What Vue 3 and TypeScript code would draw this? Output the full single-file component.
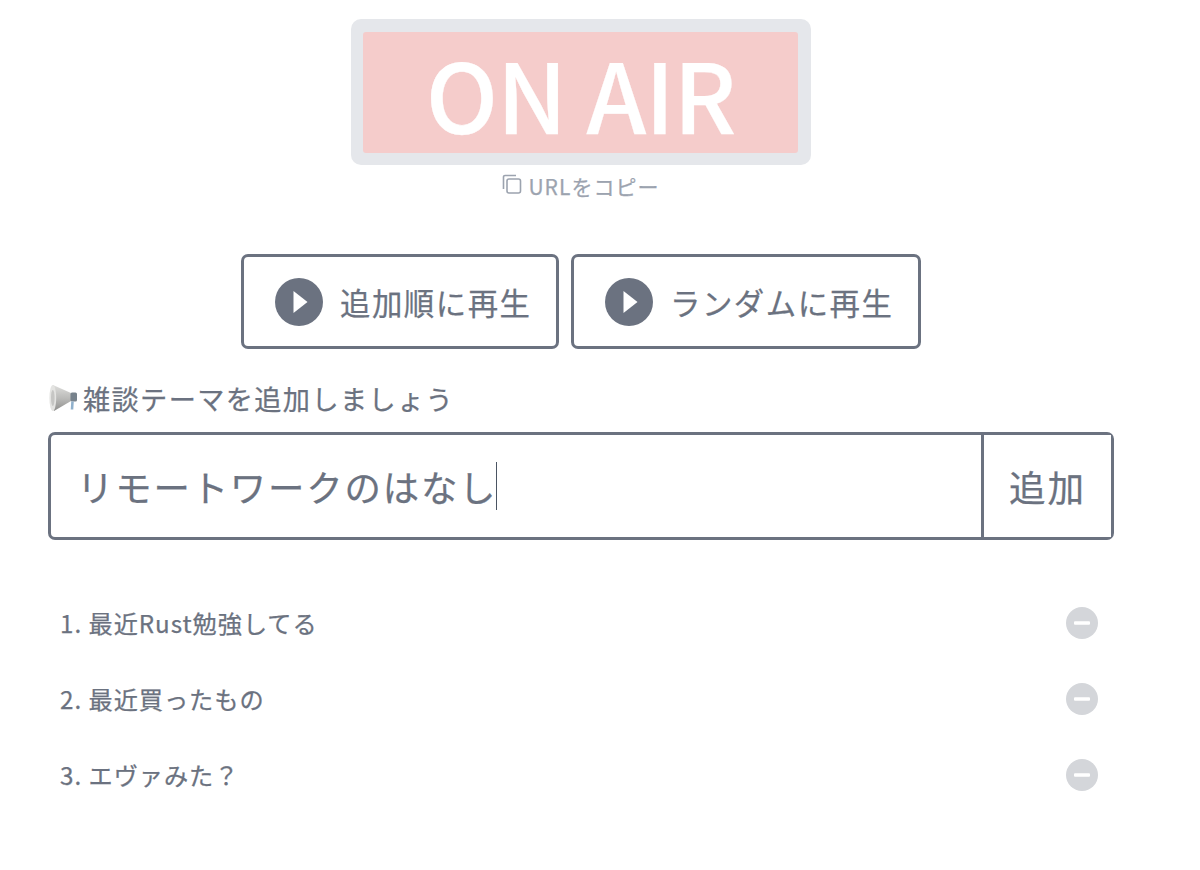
<script setup lang="ts">
const topics: string[] = ['最近Rust勉強してる', '最近買ったもの', 'エヴァみた？']
const playButtons: string[] = ['追加順に再生', 'ランダムに再生']
</script>

<template>
  <div class="page">
    <div class="sign-wrap">
      <div class="sign"><div class="sign-inner"><span class="sign-text">ON AIR</span></div></div>
      <div class="copy">
        <svg class="copy-icon" viewBox="0 0 20 20" fill="none" stroke="currentColor" stroke-width="1.6">
          <path d="M1.5 15V3A1.5 1.5 0 0 1 3 1.5H14" />
          <rect x="5" y="5" width="13.5" height="14" rx="2" />
        </svg>
        <span>URLをコピー</span>
      </div>
    </div>

    <div class="plays">
      <button v-for="label in playButtons" :key="label" class="play">
        <svg class="play-icon" viewBox="0 0 48 48">
          <circle cx="24" cy="24" r="24" fill="#6b7280" />
          <polygon points="18.5,13 18.5,35 32.5,24" fill="#fff" />
        </svg>
        <span>{{ label }}</span>
      </button>
    </div>

    <div class="heading">
      <svg class="mega" viewBox="0 0 30 30">
        <defs>
          <linearGradient id="megaBody" x1="0" y1="0" x2="0" y2="1">
            <stop offset="0" stop-color="#dededc" />
            <stop offset="0.55" stop-color="#b8b8b6" />
            <stop offset="1" stop-color="#8f8f8d" />
          </linearGradient>
        </defs>
        <path d="M5 2 L23 10 L23 18 L6 28 Q0 15 5 2z" fill="url(#megaBody)" />
        <ellipse cx="4.8" cy="15" rx="3.4" ry="13" fill="#e4e4e2" />
        <ellipse cx="4.8" cy="15" rx="1.8" ry="8" fill="#c6c6c4" />
        <rect x="22.5" y="9.5" width="6.5" height="9" rx="1.5" fill="#77828c" />
        <path d="M24.5 18.5 L24 26.5" fill="none" stroke="#8fb0cc" stroke-width="2.6" />
      </svg>
      <span>雑談テーマを追加しましょう</span>
    </div>

    <div class="entry">
      <div class="field"><span>リモートワークのはなし</span><i class="caret"></i></div>
      <button class="add">追加</button>
    </div>

    <ul class="list">
      <li v-for="(topic, i) in topics" :key="topic" class="row">
        <span class="row-text">{{ i + 1 }}. {{ topic }}</span>
        <svg class="minus" viewBox="0 0 36 36">
          <circle cx="18" cy="18" r="16" fill="#d4d6da" />
          <rect x="10" y="16.2" width="16" height="3.6" rx="1" fill="#fff" />
        </svg>
      </li>
    </ul>
  </div>
</template>

<style>
html, body { margin: 0; background: #fff; }
</style>

<style scoped>
.page {
  box-sizing: border-box;
  width: 1162px;
  height: 870px;
  padding: 19px 48px 0;
  color: #6b7280;
  font-family: "Noto Sans CJK JP", "Noto Sans", sans-serif;
  -webkit-text-stroke: 0.25px currentColor;
  overflow: hidden;
}
.sign-wrap { display: flex; flex-direction: column; align-items: center; }
.sign {
  box-sizing: border-box;
  width: 460px;
  height: 146px;
  padding: 12.5px 13px 12.5px 12px;
  border-radius: 10px;
  background: #e5e7eb;
}
.sign-inner {
  height: 100%;
  display: flex;
  align-items: center;
  justify-content: center;
  background: #f5cccb;
  border-radius: 3px;
}
.sign-text {
  color: #fff;
  font-size: 96px;
  font-weight: 500;
  line-height: 1;
  letter-spacing: -1.2px;
  padding-top: 2px;
}
.copy {
  display: flex;
  align-items: center;
  gap: 6px;
  margin-top: 6px;
  height: 30px;
  color: #9ca3af;
  font-size: 21px;
  letter-spacing: 0.05em;
}
.copy-icon { width: 20px; height: 20px; margin-top: -5px; }
.plays { display: flex; justify-content: center; gap: 12px; margin-top: 53px; }
.play {
  box-sizing: border-box;
  height: 95px;
  width: 318px;
  padding: 0 0 0 31px;
  display: flex;
  align-items: center;
  gap: 17px;
  border: 3px solid #6b7280;
  border-radius: 7px;
  background: #fff;
  color: #6b7280;
  font: inherit;
  font-size: 30.4px;
  letter-spacing: 0.05em;
}
.play + .play { width: 350px; }
.play-icon { width: 48px; height: 48px; flex: none; }
.heading {
  display: flex;
  align-items: center;
  gap: 5px;
  margin-top: 29px;
  height: 40px;
  font-size: 27.2px;
  letter-spacing: 0.05em;
}
.mega { width: 30px; height: 30px; flex: none; }
.entry {
  box-sizing: border-box;
  display: flex;
  height: 108px;
  margin-top: 14px;
  border: 3px solid #6b7280;
  border-radius: 7px;
}
.field {
  flex: 1;
  display: flex;
  align-items: center;
  padding-left: 26px;
  font-size: 36.4px;
  letter-spacing: 0.05em;
}
.caret { width: 1.5px; height: 48px; background: #4b5563; margin-left: -1.5px; }
.add {
  width: 130px;
  border: 0;
  border-left: 3px solid #6b7280;
  background: #fff;
  color: #6b7280;
  font: inherit;
  font-size: 36.6px;
  letter-spacing: 0.05em;
  padding: 0;
}
.list { list-style: none; margin: 45px 0 0; padding: 0; }
.row {
  display: flex;
  align-items: center;
  justify-content: space-between;
  height: 76px;
  padding: 0 14px 0 12px;
  font-size: 24.2px;
  letter-spacing: 0.04em;
}
.row-text { margin-top: -2px; }
.minus { width: 36px; height: 36px; flex: none; }
</style>
